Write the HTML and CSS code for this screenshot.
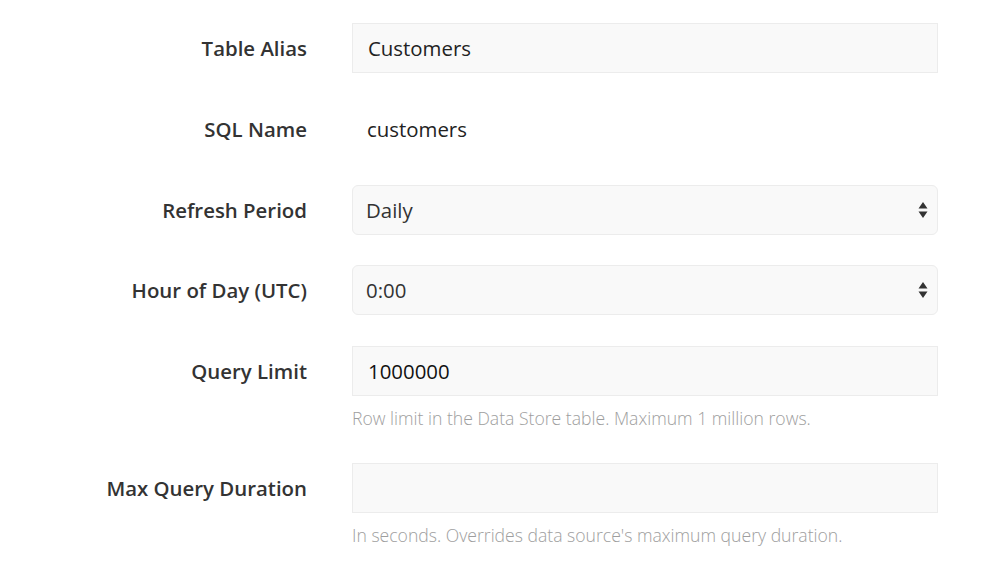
FILE: index.html
```html
<!DOCTYPE html>
<html>
<head>
<meta charset="utf-8">
<link rel="stylesheet" href="styles.css">
</head>
<body>
<form class="form">
  <div class="row">
    <label class="label">Table Alias</label>
    <div class="field"><div class="input">Customers</div></div>
  </div>
  <div class="row">
    <label class="label">SQL Name</label>
    <div class="field"><div class="static">customers</div></div>
  </div>
  <div class="row">
    <label class="label">Refresh Period</label>
    <div class="field">
      <div class="input select"><span>Daily</span>
        <svg class="arrows" width="10" height="18" viewBox="0 0 10 18"><path d="M5 1 L9.5 7.5 L0.5 7.5 Z M5 17 L9.5 10.5 L0.5 10.5 Z" fill="#333"/></svg>
      </div>
    </div>
  </div>
  <div class="row">
    <label class="label">Hour of Day (UTC)</label>
    <div class="field">
      <div class="input select"><span>0:00</span>
        <svg class="arrows" width="10" height="18" viewBox="0 0 10 18"><path d="M5 1 L9.5 7.5 L0.5 7.5 Z M5 17 L9.5 10.5 L0.5 10.5 Z" fill="#333"/></svg>
      </div>
    </div>
  </div>
  <div class="row">
    <label class="label">Query Limit</label>
    <div class="field">
      <div class="input dark">1000000</div>
      <p class="help">Row limit in the Data Store table. Maximum 1 million rows.</p>
    </div>
  </div>
  <div class="row">
    <label class="label">Max Query Duration</label>
    <div class="field">
      <div class="input"></div>
      <p class="help">In seconds. Overrides data source's maximum query duration.</p>
    </div>
  </div>
</form>
</body>
</html>
```
FILE: styles.css
```css
html, body {
  margin: 0;
  padding: 0;
  background: #fff;
}
body {
  font-family: "Open Sans", "Noto Sans", sans-serif;
  color: #333;
}
.form {
  padding-top: 23px;
}
.row {
  display: grid;
  grid-template-columns: 307px 586px;
  column-gap: 45px;
  margin-bottom: 30.75px;
}
.label {
  height: 50px;
  display: flex;
  align-items: center;
  justify-content: flex-end;
  font-weight: 600;
  font-size: 20.4px;
  color: #333;
}
.input {
  box-sizing: border-box;
  height: 50px;
  background: #f9f9f9;
  border: 1px solid #ececec;
  padding: 0 15px;
  display: flex;
  align-items: center;
  font-size: 20.4px;
  color: #222;
}
.input.dark { color: #111; }
.select {
  border-radius: 6px;
  justify-content: space-between;
  padding: 0 9px 0 13px;
  color: #333;
}
.static {
  height: 50px;
  display: flex;
  align-items: center;
  padding-left: 15px;
  font-size: 20.4px;
  color: #222;
}
.help {
  margin: 11px 0 3px;
  font-size: 17.6px;
  font-weight: 300;
  line-height: 22px;
  color: #9e9e9e;
}
```
